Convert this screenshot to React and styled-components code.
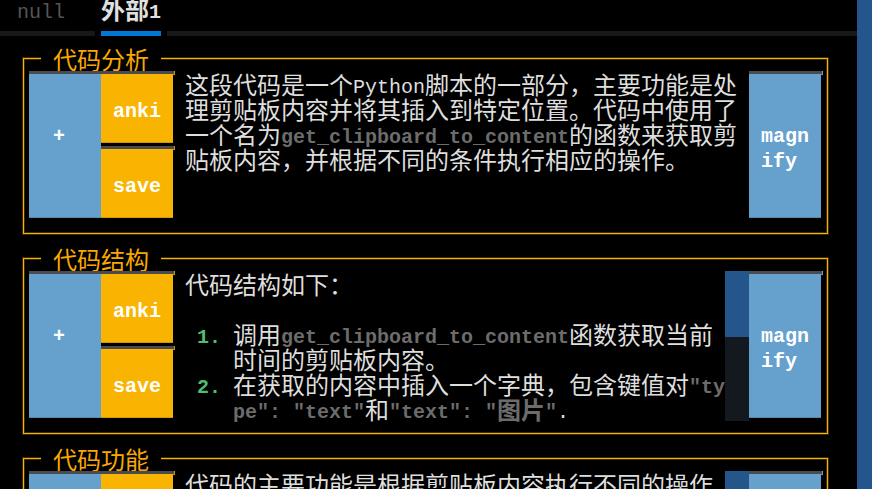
import React from "react";
import styled, { createGlobalStyle } from "styled-components";

const GlobalStyle = createGlobalStyle`
  *, *::after { box-sizing: border-box; }
  body {
    margin: 0;
    background: #000;
    color: #dedede;
    font-family: "Noto Sans CJK SC", sans-serif;
    font-size: 24px;
    line-height: 25px;
    overflow: hidden;
  }
`;

const Screen = styled.div`
  display: flex;
  height: 100vh;
  overflow: hidden;
`;

const Main = styled.main`
  flex: 1;
  min-width: 0;
`;

const PageScroll = styled.div`
  width: 15px;
  background: #24568b;
`;

const Latin = styled.span`
  font-family: "Liberation Mono", monospace;
  font-size: 20px;
  line-height: 12px;
  vertical-align: 1px;
`;

const Code = styled.code`
  font-family: "Noto Sans CJK SC", sans-serif;
  font-weight: 700;
  color: #6c6c6c;
`;

const TabList = styled.div`
  display: flex;
  align-items: flex-start;
  gap: 36px;
  height: 31px;
  padding-left: 17px;
`;

const Tab = styled.button`
  padding: 0;
  border: 0;
  background: none;
  font: inherit;
  line-height: 18px;
  font-weight: ${(p) => (p.$active ? 700 : 400)};
  color: ${(p) => (p.$active ? "#e0e0e0" : "#555")};
`;

const Rail = styled.div`
  display: flex;
  gap: 6px;
  height: 5px;
`;

const RailPart = styled.div`
  flex: ${(p) => (p.$width ? `0 0 ${p.$width}px` : "1")};
  background: ${(p) => (p.$active ? "#0178d4" : "#181818")};
`;

const Cards = styled.div`
  display: flex;
  flex-direction: column;
  gap: 12px;
  padding: 10px 29px 0 23px;
`;

const Card = styled.fieldset`
  min-width: 0;
  margin: 0;
  padding: 0 6px 12px 5px;
  border: 1px solid #f8b400;
  box-shadow: 0 0 0 1px #3c2b00, inset 0 0 0 1px #3c2b00;
`;

const Title = styled.legend`
  margin-left: 12px;
  padding: 0 12px;
  background: #000;
  color: #f8a800;
`;

const Row = styled.div`
  display: grid;
  grid-template-columns: 72px 72px minmax(0, 1fr) 72px;
  height: 150px;
`;

const Stack = styled.div`
  display: flex;
  flex-direction: column;
  gap: 3px;
  padding-bottom: 3px;
`;

const Action = styled.button`
  position: relative;
  display: flex;
  flex: 1;
  align-items: flex-start;
  padding: ${(p) => (p.$tall ? 50 : 25)}px 0 0 ${(p) => (p.$inset ? 24 : 12)}px;
  border: 0;
  border-top: 3px solid #494b50;
  background: ${(p) => (p.$blue ? "#66a1ce" : "#f8b400")};
  box-shadow: inset 0 -1px rgba(0, 0, 0, 0.15);
  color: #fff;
  font-family: "Liberation Mono", monospace;
  font-size: 20px;
  font-weight: 700;
  line-height: 25px;
  text-align: left;

  &::after {
    content: "";
    display: ${(p) => (p.$inset ? "none" : "block")};
    position: absolute;
    top: -3px;
    left: 100%;
    width: 2px;
    height: 4px;
    background: #494b50;
    border-right: 1px solid ${(p) => (p.$blue ? "#66a1ce" : "#c89200")};
    border-bottom: 1px solid ${(p) => (p.$blue ? "#66a1ce" : "#c89200")};
  }
`;

const Label = styled.span`
  width: 49px;
  word-break: break-all;
`;

const Viewer = styled.div`
  display: flex;
  min-width: 0;
`;

const Text = styled.div`
  flex: 1;
  min-width: 0;
  padding: 0 ${(p) => (p.$scroll ? 0 : 8)}px 0 12px;
  word-break: break-all;
`;

const Paragraph = styled.p`
  margin: 0 0 25px;
`;

const List = styled.ol`
  margin: 0;
  padding: 0;
  list-style: none;
`;

const Item = styled.li`
  display: grid;
  grid-template-columns: 48px minmax(0, 1fr);
`;

const Marker = styled.span`
  padding-left: 12px;
  color: #4ebf71;
  font-weight: 700;
`;

const Track = styled.div`
  flex: 0 0 24px;
  background: #14181f;
`;

const Thumb = styled.div`
  height: 66px;
  background: #24568b;
`;

function Section({ title, scroll, children }) {
  return (
    <Card>
      <Title>{title}</Title>
      <Row>
        <Stack>
          <Action type="button" $blue $tall $inset>
            <Label>+</Label>
          </Action>
        </Stack>
        <Stack>
          <Action type="button"><Label>anki</Label></Action>
          <Action type="button"><Label>save</Label></Action>
        </Stack>
        <Viewer>
          <Text $scroll={scroll}>{children}</Text>
          {scroll && <Track><Thumb /></Track>}
        </Viewer>
        <Stack>
          <Action type="button" $blue $tall>
            <Label>magnify</Label>
          </Action>
        </Stack>
      </Row>
    </Card>
  );
}

export default function App() {
  return (
    <Screen>
      <GlobalStyle />
      <Main>
        <TabList role="tablist">
          <Tab type="button" role="tab" aria-selected="false"><Latin>null</Latin></Tab>
          <Tab type="button" role="tab" aria-selected="true" $active>外部<Latin>1</Latin></Tab>
        </TabList>
        <Rail>
          <RailPart $width={95} />
          <RailPart $width={60} $active />
          <RailPart />
        </Rail>
        <Cards>
          <Section title="代码分析">
            <Paragraph>
              这段代码是一个<Latin>Python</Latin>脚本的一部分，主要功能是处理剪贴板内容并将其插入到特定位置。代码中使用了一个名为<Code><Latin>get_clipboard_to_content</Latin></Code>的函数来获取剪贴板内容，并根据不同的条件执行相应的操作。
            </Paragraph>
          </Section>
          <Section title="代码结构" scroll>
            <Paragraph>代码结构如下：</Paragraph>
            <List>
              <Item>
                <Marker><Latin>1.</Latin></Marker>
                <span>调用<Code><Latin>get_clipboard_to_content</Latin></Code>函数获取当前时间的剪贴板内容。</span>
              </Item>
              <Item>
                <Marker><Latin>2.</Latin></Marker>
                <span>
                  在获取的内容中插入一个字典，包含键值对<Code><Latin>"type": "text"</Latin></Code>和<Code><Latin>"text": "</Latin>图片<Latin>"</Latin></Code><Latin>.</Latin>
                </span>
              </Item>
            </List>
          </Section>
          <Section title="代码功能" scroll>
            <Paragraph>代码的主要功能是根据剪贴板内容执行不同的操作</Paragraph>
          </Section>
        </Cards>
      </Main>
      <PageScroll />
    </Screen>
  );
}
